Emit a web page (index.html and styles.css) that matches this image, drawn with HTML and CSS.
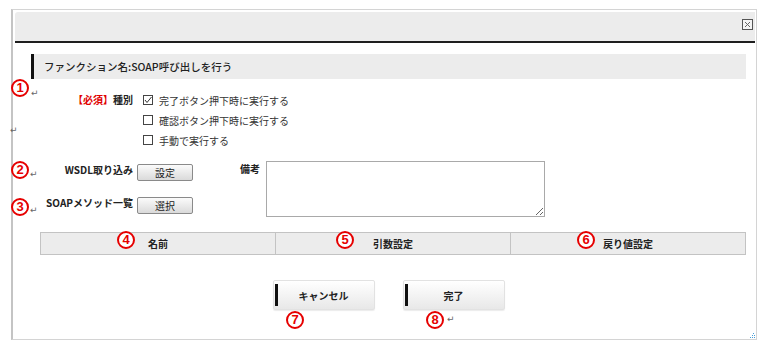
FILE: index.html
```html
<!DOCTYPE html>
<html lang="ja">
<head>
    <meta charset="UTF-8">
    <title>SOAP呼び出し</title>
    <link rel="stylesheet" href="styles.css">
</head>
<body>
    <div class="page">
        <div class="dialog">
            <div class="dialog-head">
                <span class="close-btn">
                    <svg width="11" height="11" viewBox="0 0 11 11">
                        <rect x="0.5" y="0.5" width="10" height="10" fill="#f4f4f4" stroke="#555"/>
                        <path d="M3 3 L8 8 M8 3 L3 8" stroke="#666" stroke-width="1"/>
                    </svg>
                </span>
            </div>
            <div class="dialog-body">
                <div class="func-title">ファンクション名:SOAP呼び出しを行う</div>

                <div class="type-row">
                    <div class="field-label"><span class="req">【必須】</span>種別</div>
                    <ul class="check-list">
                        <li><span class="check"><svg width="8" height="8" viewBox="0 0 8 8"><path d="M1 4 L3 6.5 L7.5 1" fill="none" stroke="#333" stroke-width="1"/></svg></span>完了ボタン押下時に実行する</li>
                        <li><span class="check"></span>確認ボタン押下時に実行する</li>
                        <li><span class="check"></span>手動で実行する</li>
                    </ul>
                </div>

                <div class="io-row">
                    <div class="io-left">
                        <div class="io-line">
                            <div class="field-label">WSDL取り込み</div>
                            <button class="small-btn">設定</button>
                        </div>
                        <div class="io-line">
                            <div class="field-label">SOAPメソッド一覧</div>
                            <button class="small-btn">選択</button>
                        </div>
                    </div>
                    <div class="memo">
                        <div class="memo-label">備考</div>
                        <textarea class="memo-box"></textarea>
                    </div>
                </div>

                <table class="param-table">
                    <thead>
                        <tr><th>名前</th><th>引数設定</th><th>戻り値設定</th></tr>
                    </thead>
                </table>

                <div class="actions">
                    <button class="main-btn">キャンセル</button>
                    <button class="main-btn">完了</button>
                </div>
            </div>
            <span class="grip">
                <svg width="5" height="5" viewBox="0 0 5 5">
                    <rect x="3" y="0" width="1" height="1" fill="#4a9fd8"/>
                    <rect x="2" y="2" width="1" height="1" fill="#4a9fd8"/>
                    <rect x="4" y="2" width="1" height="1" fill="#4a9fd8"/>
                    <rect x="0" y="4" width="1" height="1" fill="#4a9fd8"/>
                    <rect x="2" y="4" width="1" height="1" fill="#4a9fd8"/>
                    <rect x="4" y="4" width="1" height="1" fill="#4a9fd8"/>
                </svg>
            </span>
        </div>

        <!-- 注記番号 -->
        <span class="note n1">1</span>
        <span class="note n2">2</span>
        <span class="note n3">3</span>
        <span class="note n4">4</span>
        <span class="note n5">5</span>
        <span class="note n6">6</span>
        <span class="note n7">7</span>
        <span class="note n8">8</span>
        <span class="ret r1">↵</span>
        <span class="ret r2">↵</span>
        <span class="ret r3">↵</span>
        <span class="ret r4">↵</span>
        <span class="ret r5">↵</span>
    </div>
</body>
</html>
```

FILE: styles.css
```css
:root {
    --panel-color: #ececec;
    --border-color: #c3c3c3;
    --text-color: #222;
    --note-color: #e60000;
}

body {
    margin: 0;
    font-family: "Noto Sans CJK JP", "Liberation Sans", sans-serif;
    font-size: 10px;
    color: var(--text-color);
    background: #fff;
}

.page {
    position: relative;
    width: 760px;
    height: 345px;
    padding: 9px 0 0 11px;
    box-sizing: border-box;
}

.dialog {
    position: relative;
    width: 746px;
    height: 331px;
    box-sizing: border-box;
    border: 1px solid #d4d4d4;
    border-left: 2px solid #c4c4c4;
}

.dialog-head {
    height: 31px;
    box-sizing: border-box;
    margin: 2px 1px 0 2px;
    padding: 7px 2px 0 0;
    background: var(--panel-color);
    border-bottom: 2px solid #1e1e1e;
    border-top-left-radius: 3px;
    display: flex;
    justify-content: flex-end;
    align-items: flex-start;
}

.close-btn {
    display: block;
    width: 11px;
    height: 11px;
}

.close-btn svg {
    display: block;
}

.dialog-body {
    padding: 11px 10px 0 18px;
}

.func-title {
    height: 25px;
    line-height: 25px;
    background: var(--panel-color);
    border-left: 3px solid #111;
    padding-left: 10px;
    font-size: 10.5px;
    font-weight: 500;
}

.type-row {
    display: flex;
    margin-top: 11px;
}

.field-label {
    flex: none;
    width: 102px;
    text-align: right;
    font-weight: bold;
    line-height: 20px;
}

.req {
    color: #e00000;
}

.check-list {
    list-style: none;
    margin: 0;
    padding: 0 0 0 10px;
}

.check-list li {
    display: flex;
    align-items: center;
    gap: 6px;
    height: 20px;
    color: #333;
}

.check {
    display: flex;
    align-items: center;
    justify-content: center;
    width: 10px;
    height: 10px;
    box-sizing: border-box;
    border: 1px solid #444;
    background: #fff;
}

.io-row {
    display: flex;
    align-items: flex-start;
    margin-top: 11px;
}

.io-line {
    display: flex;
    align-items: flex-start;
    gap: 4px;
    height: 33px;
    padding-top: 3px;
    box-sizing: border-box;
}

.io-line:last-child {
    height: 27px;
}

.io-line .field-label {
    line-height: 12px;
}

.small-btn {
    width: 56px;
    height: 17px;
    padding: 0;
    font-family: inherit;
    font-size: 10px;
    color: var(--text-color);
    border: 1px solid #8a8a8a;
    border-radius: 2px;
    background: linear-gradient(#fbfbfb, #dadada);
}

.memo {
    display: flex;
    align-items: flex-start;
    gap: 6px;
    margin-left: 47px;
}

.memo-label {
    font-weight: bold;
    line-height: 12px;
    margin-top: 2px;
}

.memo-box {
    display: block;
    width: 279px;
    height: 56px;
    box-sizing: border-box;
    margin: 0;
    padding: 2px;
    border: 1px solid #a9a9a9;
    font-family: inherit;
}

.param-table {
    margin: 11px 0 0 9px;
    width: 706px;
    table-layout: fixed;
    border-collapse: collapse;
}

.param-table th {
    height: 21px;
    padding: 0;
    background: var(--panel-color);
    border: 1px solid var(--border-color);
    font-size: 10px;
    font-weight: bold;
}

.actions {
    display: flex;
    justify-content: center;
    gap: 28px;
    margin-top: 25px;
}

.main-btn {
    position: relative;
    width: 102px;
    height: 30px;
    padding: 0;
    font-family: inherit;
    font-size: 10px;
    font-weight: bold;
    color: var(--text-color);
    border: 1px solid #e2e2e2;
    border-radius: 2px;
    background: linear-gradient(#ffffff, #e8e8e8);
    box-shadow: 0 1px 1px rgba(0,0,0,0.08);
}

.main-btn::before {
    content: "";
    position: absolute;
    left: 1px;
    top: 3px;
    bottom: 3px;
    width: 3px;
    background: #111;
}

.grip {
    position: absolute;
    right: 1px;
    bottom: 1px;
    width: 5px;
    height: 5px;
}

.grip svg {
    display: block;
}

/* 注記 */
.note {
    position: absolute;
    width: 18px;
    height: 18px;
    box-sizing: border-box;
    border: 2px solid var(--note-color);
    border-radius: 50%;
    color: var(--note-color);
    font-family: "Liberation Sans", Arial, sans-serif;
    font-size: 13px;
    font-weight: bold;
    line-height: 14px;
    text-align: center;
    background: #fff;
}

.n1 { left: 11px; top: 79px; }
.n2 { left: 11px; top: 161px; }
.n3 { left: 11px; top: 198px; }
.n4 { left: 117px; top: 231px; }
.n5 { left: 336px; top: 231px; }
.n6 { left: 577px; top: 231px; }
.n7 { left: 286px; top: 311px; }
.n8 { left: 426px; top: 311px; }

.ret {
    position: absolute;
    font-family: "DejaVu Sans", sans-serif;
    font-size: 9px;
    line-height: 9px;
    color: #666;
}

.r1 { left: 31px; top: 89px; }
.r2 { left: 10px; top: 126px; }
.r3 { left: 30px; top: 170px; }
.r4 { left: 30px; top: 206px; }
.r5 { left: 447px; top: 315px; }
```
